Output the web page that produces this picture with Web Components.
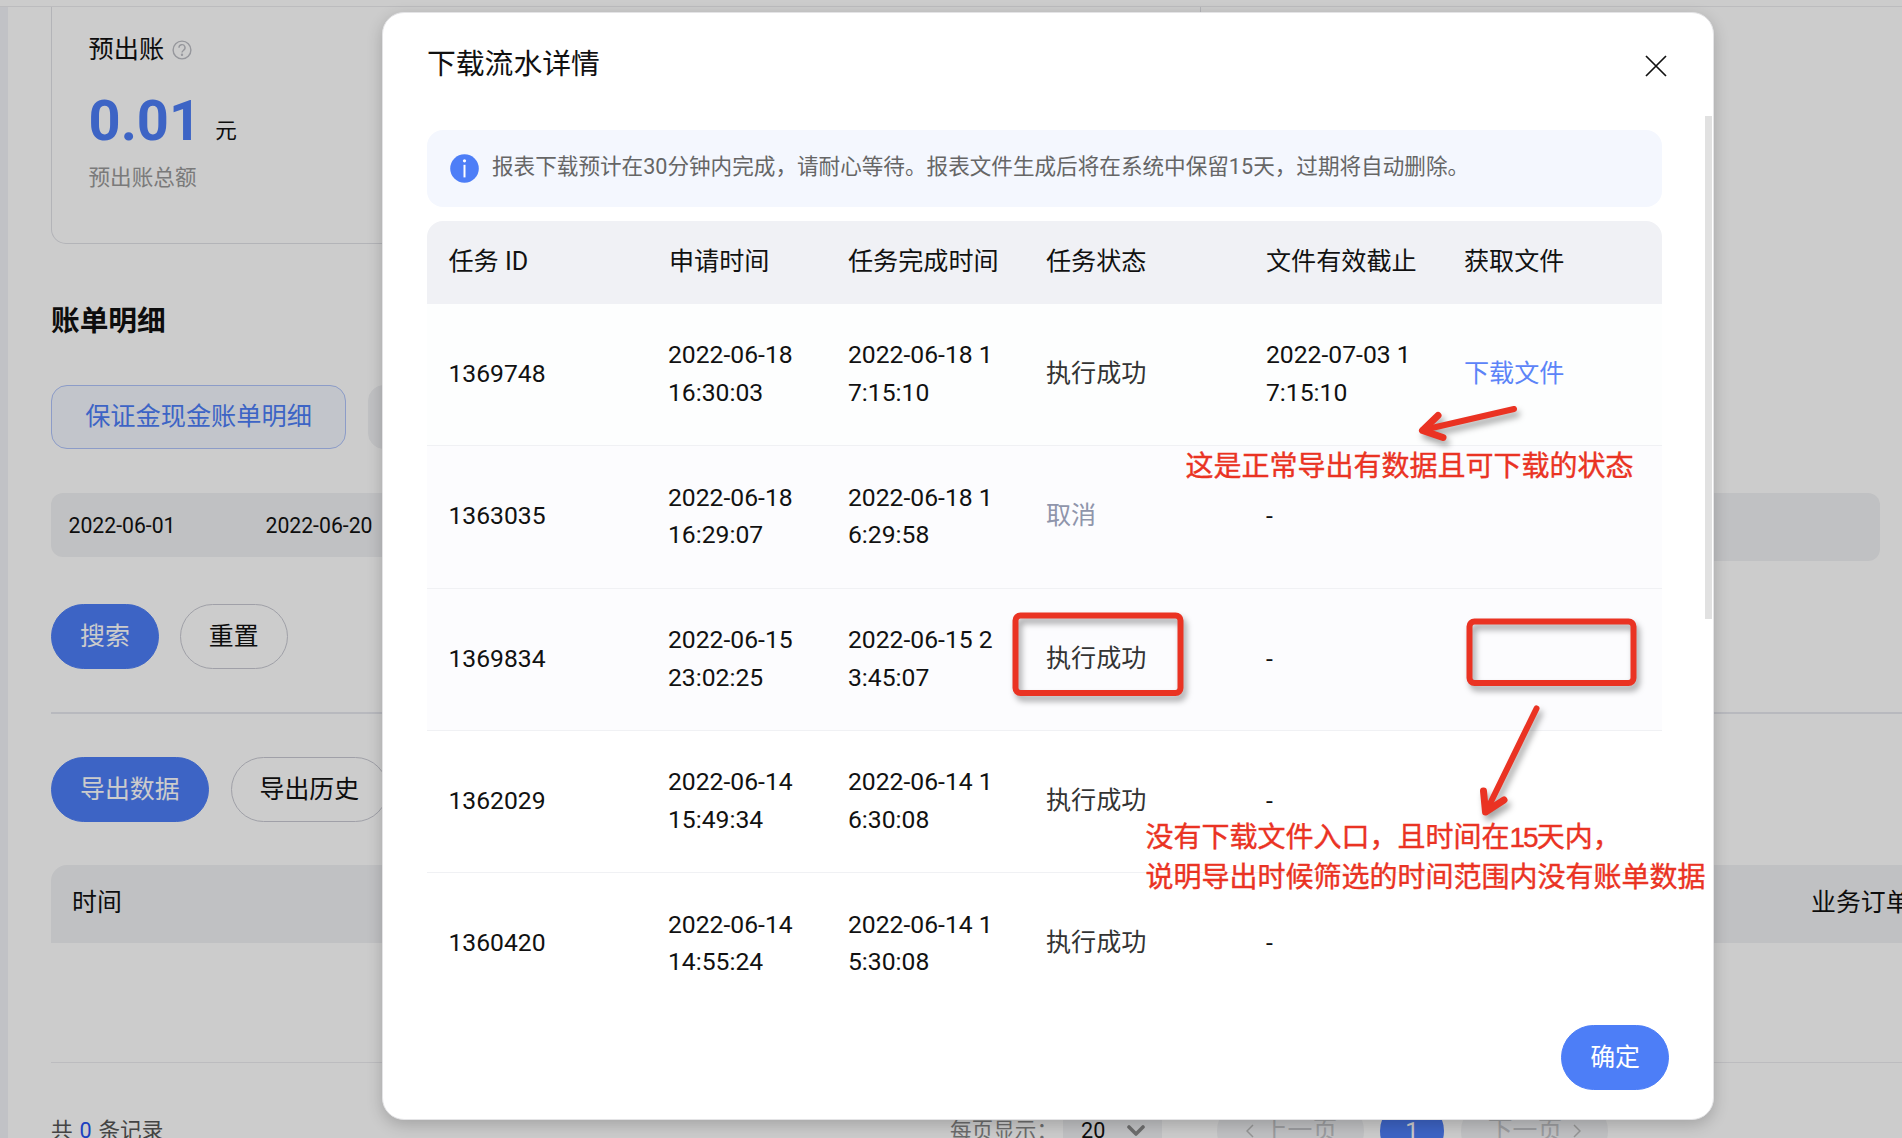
<!DOCTYPE html>
<html lang="zh-CN">
<head>
<meta charset="utf-8">
<title>下载流水详情</title>
<style>
    html, body {
        margin: 0;
        height: 1138px;
        overflow: hidden;
    }
    body {
        position: relative;
        background: #fff;
        color: #111;
        font-family: Roboto, "Noto Sans CJK SC", sans-serif;
        font-size: 24.9px;
        line-height: 38px;
    }
</style>
</head>
<body>
<bill-page></bill-page>
<page-mask>
    <modal-dialog heading="下载流水详情">
        <tip-alert>报表下载预计在30分钟内完成，请耐心等待。报表文件生成后将在系统中保留15天，过期将自动删除。</tip-alert>
        <task-table></task-table>
        <pill-button slot="footer" type="primary">确定</pill-button>
    </modal-dialog>
</page-mask>
<note-layer></note-layer>

<script>
class PillButton extends HTMLElement {
    constructor() {
        super();
        this.attachShadow({ mode: 'open' });
        this.shadowRoot.innerHTML = `
            <style>
                :host {
                    display: inline-flex;
                    align-items: center;
                    justify-content: center;
                    box-sizing: border-box;
                    height: 65px;
                    padding: 0 28px;
                    border: 1px solid #c8c9d2;
                    border-radius: 33px;
                    white-space: nowrap;
                }
                :host([type="primary"]) {
                    background: #4d7ef7;
                    border-color: #4d7ef7;
                    color: #fff;
                }
            </style>
            <slot></slot>
        `;
    }
}
customElements.define('pill-button', PillButton);

class StatCard extends HTMLElement {
    constructor() {
        super();
        this.attachShadow({ mode: 'open' });
        this.shadowRoot.innerHTML = `
            <style>
                :host {
                    display: block;
                    box-sizing: border-box;
                    width: 1150px;
                    height: 237px;
                    padding: 24px 37px 0 36.5px;
                    border: 1px solid #e0e1e6;
                    border-top: 0;
                    border-radius: 0 0 15px 15px;
                }
                .title {
                    display: flex;
                    align-items: center;
                    gap: 8px;
                    font-size: 25.2px;
                }
                .value {
                    display: flex;
                    align-items: baseline;
                    gap: 14px;
                    height: 70px;
                    margin-top: 17px;
                    line-height: 70px;
                    font-size: 21.6px;
                }
                .value span { position: relative; top: -2px; }
                b {
                    color: #4d7ef7;
                    font-size: 56px;
                    font-weight: 700;
                }
                .desc {
                    margin-top: 3px;
                    color: #999;
                    font-size: 21.6px;
                }
            </style>
            <div class="title">
                <slot name="title"></slot>
                <svg width="20" height="20" viewBox="0 0 20 20" fill="none" stroke="#bcbdc4" stroke-width="1.4">
                    <circle cx="10" cy="10" r="8.9"/>
                    <path d="M7 7.800a3 3 0 1 1 4.600 2.400c-1 .7-1.600 1.200-1.600 2.400"/>
                    <circle cx="10" cy="14.8" r=".5"/>
                </svg>
            </div>
            <div class="value"><b><slot name="value"></slot></b><span>元</span></div>
            <div class="desc"><slot name="desc"></slot></div>
        `;
    }
}
customElements.define('stat-card', StatCard);

class PageFooter extends HTMLElement {
    constructor() {
        super();
        this.attachShadow({ mode: 'open' });
        this.shadowRoot.innerHTML = `
            <style>
                :host {
                    display: flex;
                    height: 64px;
                    align-items: center;
                    line-height: 64px;
                    font-size: 21.6px;
                    color: #555;
                    white-space: nowrap;
                }
                .total {
                    width: 899px;
                    word-spacing: 1.5px;
                }
                .total i {
                    font-style: normal;
                    color: #2650f0;
                }
                .size {
                    width: 113px;
                    color: #888;
                }
                .select {
                    display: flex;
                    align-items: center;
                    justify-content: space-between;
                    box-sizing: border-box;
                    width: 99px;
                    height: 64px;
                    padding: 0 17px 0 18px;
                    background: #f1f2f4;
                    color: #111;
                }
                .nav, .now {
                    display: flex;
                    align-items: center;
                    justify-content: center;
                    box-sizing: border-box;
                    height: 64px;
                    border-radius: 32px;
                }
                .nav {
                    gap: 9px;
                    width: 147px;
                    background: #f1f2f4;
                    color: #c2c3c7;
                    font-size: 24.8px;
                }
                .nav.prev {
                    margin-left: 55px;
                    padding-left: 2px;
                }
                .nav.next { gap: 11px; }
                .now {
                    width: 64px;
                    margin: 0 17px 0 16px;
                    background: #4d7ef7;
                    color: #fff;
                    font-size: 24px;
                }
            </style>
            <div class="total">共 <i>0</i> 条记录</div>
            <div class="size">每页显示：</div>
            <div class="select">
                <span>20</span>
                <svg width="18" height="12" viewBox="0 0 18 12" fill="none" stroke="#8a8a8a" stroke-width="3.6" stroke-linecap="round" stroke-linejoin="round"><path d="M2 2l7 7 7-7"/></svg>
            </div>
            <div class="nav prev"><svg width="8" height="14" viewBox="0 0 8 14" fill="none" stroke="#bbb" stroke-width="1.5"><path d="M7 1L1 7l6 6"/></svg>上一页</div>
            <div class="now">1</div>
            <div class="nav next">下一页<svg width="8" height="14" viewBox="0 0 8 14" fill="none" stroke="#bbb" stroke-width="1.5"><path d="M1 1l6 6-6 6"/></svg></div>
        `;
    }
}
customElements.define('page-footer', PageFooter);

class BillPage extends HTMLElement {
    constructor() {
        super();
        this.attachShadow({ mode: 'open' });
        this.shadowRoot.innerHTML = `
            <style>
                :host {
                    display: block;
                    height: 1138px;
                    overflow: hidden;
                }
                .top {
                    height: 6px;
                    border-bottom: 1px solid #ececee;
                }
                .wrap {
                    display: flex;
                    height: 1131px;
                }
                .side {
                    flex: none;
                    width: 8px;
                    background: #f2f3f8;
                }
                main {
                    flex: 1;
                    min-width: 0;
                    padding-left: 43px;
                }
                h2 {
                    margin: 57px 0 0;
                    font-size: 28.7px;
                    line-height: 40px;
                    font-weight: 700;
                }
                .tabs {
                    display: flex;
                    gap: 22px;
                    margin-top: 44px;
                }
                .tab {
                    box-sizing: border-box;
                    width: 295px;
                    height: 64px;
                    border: 1px solid #f1f2f4;
                    border-radius: 16px;
                    background: #f1f2f4;
                    line-height: 62px;
                    text-align: center;
                    font-size: 25.2px;
                }
                .tab.on {
                    border-color: #afc3fa;
                    background: #f3f7fe;
                    color: #4d7ef7;
                }
                .filters {
                    display: flex;
                    gap: 20px;
                    height: 68px;
                    margin: 44px 22px 0 0;
                }
                .range {
                    display: flex;
                    gap: 90px;
                    box-sizing: border-box;
                    width: 600px;
                    height: 64px;
                    padding-left: 17.5px;
                    border-radius: 12px;
                    background: #f1f2f4;
                    line-height: 66px;
                    font-size: 21.2px;
                }
                .field {
                    flex: 1;
                    border-radius: 12px;
                    background: #f1f2f4;
                }
                .actions {
                    display: flex;
                    gap: 21px;
                    margin-top: 43px;
                }
                .line + .actions { gap: 22px; }
                .line {
                    height: 2px;
                    margin: 43px 0;
                    background: #e7e8ee;
                }
                .thead {
                    display: flex;
                    justify-content: space-between;
                    box-sizing: border-box;
                    width: 1860px;
                    height: 78px;
                    margin-top: 43px;
                    padding-left: 21px;
                    border-radius: 16px 0 0 0;
                    background: #f1f2f4;
                    line-height: 76px;
                }
                .thead span:last-child { width: 100px; white-space: nowrap; }
                .empty {
                    height: 119px;
                    border-bottom: 1px solid #ececef;
                }
                page-footer { margin-top: 36px; }
            </style>
            <div class="top"></div>
            <div class="wrap">
                <div class="side"></div>
                <main>
                    <stat-card>
                        <span slot="title">预出账</span>
                        <span slot="value">0.01</span>
                        <span slot="desc">预出账总额</span>
                    </stat-card>
                    <h2>账单明细</h2>
                    <div class="tabs"><div class="tab on">保证金现金账单明细</div><div class="tab"></div></div>
                    <div class="filters">
                        <div class="range"><span>2022-06-01</span><span>2022-06-20</span></div>
                        <div class="field"></div>
                    </div>
                    <div class="actions"><pill-button type="primary">搜索</pill-button><pill-button>重置</pill-button></div>
                    <div class="line"></div>
                    <div class="actions"><pill-button type="primary">导出数据</pill-button><pill-button>导出历史</pill-button></div>
                    <div class="thead"><span>时间</span><span>业务订单</span></div>
                    <div class="empty"></div>
                    <page-footer></page-footer>
                </main>
            </div>
        `;
    }
}
customElements.define('bill-page', BillPage);

class PageMask extends HTMLElement {
    constructor() {
        super();
        this.attachShadow({ mode: 'open' });
        this.shadowRoot.innerHTML = `
            <style>
                :host {
                    position: absolute;
                    inset: 0;
                    display: block;
                    box-sizing: border-box;
                    padding: 12px 0 0 382px;
                    background: rgba(0, 0, 0, .2);
                }
            </style>
            <slot></slot>
        `;
    }
}
customElements.define('page-mask', PageMask);

class ModalDialog extends HTMLElement {
    constructor() {
        super();
        this.attachShadow({ mode: 'open' });
        this.shadowRoot.innerHTML = `
            <style>
                :host {
                    display: flex;
                    flex-direction: column;
                    box-sizing: border-box;
                    width: 1332px;
                    height: 1108px;
                    border: 1px solid #e4e4e6;
                    border-radius: 22px;
                    background: #fff;
                    box-shadow: 0 5px 16px rgba(0, 0, 0, .2);
                }
                header {
                    display: flex;
                    align-items: center;
                    justify-content: space-between;
                    flex: none;
                    height: 103px;
                    padding: 0 46px 0 44px;
                    font-size: 28.8px;
                }
                header span { line-height: 103px; }
                header svg { margin-top: 3px; }
                .body {
                    display: flex;
                    flex: none;
                    height: 872px;
                }
                .content {
                    width: 1235px;
                    margin-left: 44px;
                    padding-top: 14px;
                }
                .bar {
                    width: 7px;
                    height: 503px;
                    margin-left: auto;
                    margin-right: 1px;
                    background: #e1e1e1;
                }
                footer {
                    display: flex;
                    justify-content: flex-end;
                    padding: 37px 44px 0 0;
                    line-height: 36px;
                }
            </style>
            <header>
                <span>${this.getAttribute('heading')}</span>
                <svg width="22" height="22" viewBox="0 0 22 22" fill="none" stroke="#111" stroke-width="1.7"><path d="M1 1l20 20M21 1L1 21"/></svg>
            </header>
            <div class="body">
                <div class="content"><slot></slot></div>
                <div class="bar"></div>
            </div>
            <footer><slot name="footer"></slot></footer>
        `;
    }
}
customElements.define('modal-dialog', ModalDialog);

class TipAlert extends HTMLElement {
    constructor() {
        super();
        this.attachShadow({ mode: 'open' });
        this.shadowRoot.innerHTML = `
            <style>
                :host {
                    display: flex;
                    align-items: center;
                    gap: 13px;
                    height: 77px;
                    margin-bottom: 14px;
                    padding-left: 23px;
                    border-radius: 16px;
                    background: #f4f7fe;
                    color: #666;
                    font-size: 21.6px;
                    line-height: 74px;
                    white-space: nowrap;
                }
                span { height: 77px; }
            </style>
            <svg width="29" height="29" viewBox="0 0 29 29">
                <circle cx="14.5" cy="14.5" r="14.3" fill="#4d7ef7"/>
                <circle cx="14.5" cy="6.8" r="1.6" fill="#fff"/>
                <path d="M14.5 10.800v12.600" stroke="#fff" stroke-width="2"/>
            </svg>
            <span><slot></slot></span>
        `;
    }
}
customElements.define('tip-alert', TipAlert);

class TaskTable extends HTMLElement {
    constructor() {
        super();
        this.attachShadow({ mode: 'open' });
        const rows = [
            ['1369748', '2022-06-18<br>16:30:03', '2022-06-18 1<br>7:15:10', '执行成功', '2022-07-03 1<br>7:15:10', '下载文件'],
            ['1363035', '2022-06-18<br>16:29:07', '2022-06-18 1<br>6:29:58', '取消', '-', ''],
            ['1369834', '2022-06-15<br>23:02:25', '2022-06-15 2<br>3:45:07', '执行成功', '-', ''],
            ['1362029', '2022-06-14<br>15:49:34', '2022-06-14 1<br>6:30:08', '执行成功', '-', ''],
            ['1360420', '2022-06-14<br>14:55:24', '2022-06-14 1<br>5:30:08', '执行成功', '-', '']
        ];
        this.shadowRoot.innerHTML = `
            <style>
                :host { display: block; }
                .row {
                    display: grid;
                    grid-template-columns: 219px 180px 198px 220px 198px 220px;
                    align-items: center;
                    box-sizing: border-box;
                    height: 142px;
                    padding-bottom: 1.5px;
                    border-bottom: 1px solid #f0f1f4;
                    font-size: 24.7px;
                    line-height: 37.6px;
                }
                .row > div {
                    padding-left: 22px;
                    white-space: nowrap;
                }
                .row > div:first-child { padding-left: 21.5px; }
                .head {
                    height: 83px;
                    border: 0;
                    border-radius: 16px 16px 0 0;
                    background: #f0f1f5;
                    font-size: 25.1px;
                }
                .head > div:nth-child(2) { padding-left: 23px; }
                .row:nth-of-type(2) { background: #fdfefe; }
                .row:nth-of-type(3) { height: 143px; }
                .row:nth-of-type(3), .row:nth-of-type(4) { background: #fcfcfe; }
                .row:last-child { border-bottom: 0; }
                .row > .state, .row > .cancel, .row > .link { font-size: 25.1px; }
                .state { color: #333; }
                .cancel { color: #8f95ab; }
                .link { color: #5c84f8; }
            </style>
            <div class="row head">
                <div>任务 ID</div><div>申请时间</div><div>任务完成时间</div><div>任务状态</div><div>文件有效截止</div><div>获取文件</div>
            </div>
            ${rows.map(r => `
                <div class="row">
                    <div>${r[0]}</div><div>${r[1]}</div><div>${r[2]}</div>
                    <div class="${r[3] === '取消' ? 'cancel' : 'state'}">${r[3]}</div>
                    <div>${r[4]}</div><div class="link">${r[5]}</div>
                </div>
            `).join('')}
        `;
    }
}
customElements.define('task-table', TaskTable);

// red marks drawn over the dialog
class NoteLayer extends HTMLElement {
    constructor() {
        super();
        this.attachShadow({ mode: 'open' });
        this.shadowRoot.innerHTML = `
            <style>
                :host {
                    position: absolute;
                    inset: 0;
                    display: block;
                    color: #ea3323;
                    font: 28px/40px "Liberation Sans", "Noto Sans CJK SC", sans-serif;
                    -webkit-text-stroke: .4px #ea3323;
                }
                svg {
                    position: absolute;
                    left: 0;
                    top: 0;
                    filter: drop-shadow(3px 5px 3px rgba(0, 0, 0, .35));
                }
                p {
                    position: absolute;
                    margin: 0;
                    white-space: nowrap;
                }
                .num { letter-spacing: -2px; }
                .a { left: 1185.5px; top: 446.5px; }
                .b { left: 1145.5px; top: 817.5px; }
            </style>
            <svg width="1902" height="1138" fill="none" stroke="#ea3323" stroke-width="6" stroke-linecap="round" stroke-linejoin="round">
                <rect x="1015.5" y="615.5" width="165" height="77.5" rx="5"/>
                <rect x="1469.5" y="621.5" width="164" height="61.5" rx="5"/>
                <path d="M1514 409L1423 430"/>
                <path d="M1438 415.500L1422.500 430.500L1443 437.500" stroke-width="7"/>
                <path d="M1536.500 708.500L1486 812"/>
                <path d="M1483.500 791L1485.500 812L1504 800" stroke-width="7"/>
            </svg>
            <p class="a">这是正常导出有数据且可下载的状态</p>
            <p class="b">没有下载文件入口，且时间在<span class="num">15</span>天内，<br>说明导出时候筛选的时间范围内没有账单数据</p>
        `;
    }
}
customElements.define('note-layer', NoteLayer);
</script>
</body>
</html>
